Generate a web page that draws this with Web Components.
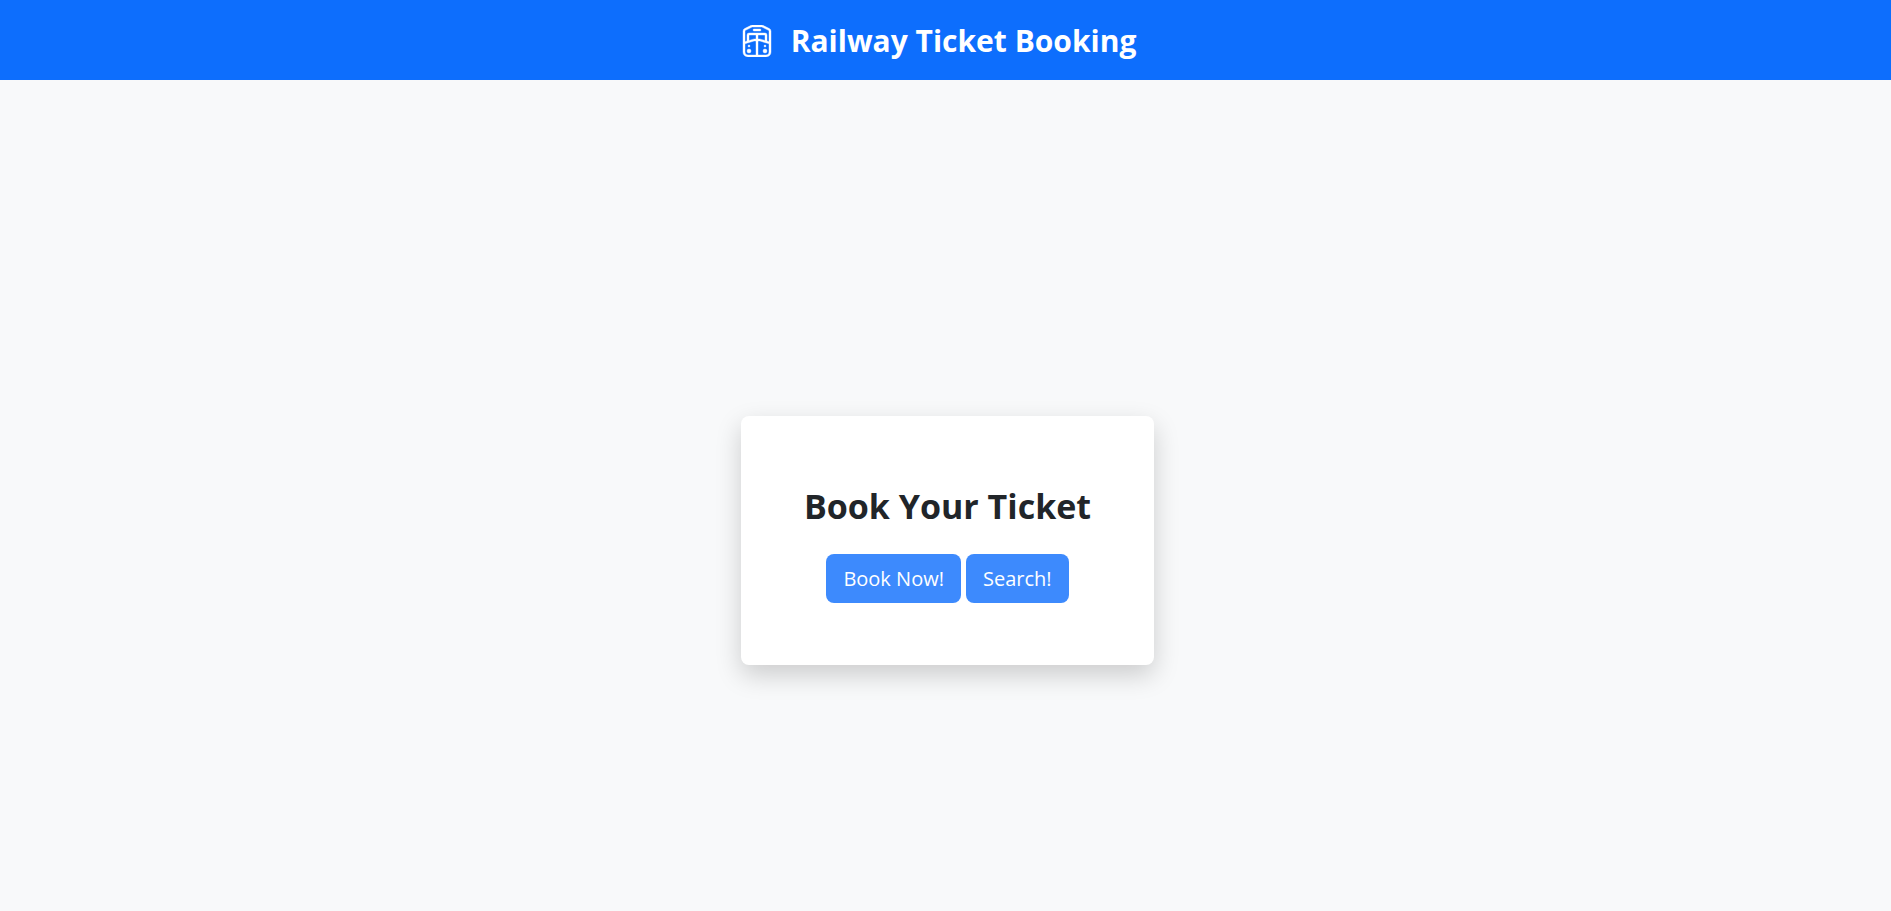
<!DOCTYPE html>
<html lang="en">
<head>
<meta charset="utf-8">
<title>Railway Ticket Booking</title>
<style>
html, body { margin: 0; }
body { font-family: "Segoe UI", "Open Sans", "Noto Sans", sans-serif; font-size: 16px; line-height: 24px; color: #212529; background: #f8f9fa; }
</style>
</head>
<body>
<booking-page>
  <site-header slot="header"><train-icon slot="icon"></train-icon>Railway Ticket Booking</site-header>
  <ticket-card>
    <span slot="title">Book Your Ticket</span>
    <action-button>Book Now!</action-button>
    <action-button>Search!</action-button>
  </ticket-card>
</booking-page>
<script>
const define = (name, html) => customElements.define(name, class extends HTMLElement {
  constructor() {
    super();
    const template = document.createElement('template');
    template.innerHTML = html;
    this.attachShadow({ mode: 'open' }).append(template.content.cloneNode(true));
  }
});

define('booking-page', `
<style>
:host { display: flex; flex-direction: column; min-height: 100vh; }
main { flex: 1; box-sizing: border-box; display: flex; align-items: center; justify-content: center; padding: 89px 0 0 4px; }
</style>
<slot name="header"></slot>
<main><slot></slot></main>`);

define('train-icon', `
<style>
:host { display: block; }
svg { display: block; width: 32px; height: 32px; fill: currentColor; stroke: currentColor; stroke-width: .2; }
</style>
<svg viewBox="0 0 16 16" aria-hidden="true">
<path d="M5.065.158A1.5 1.5 0 0 1 5.736 0h4.528a1.5 1.5 0 0 1 .67.158l3.237 1.618a1.5 1.5 0 0 1 .83 1.342V13.5a2.5 2.5 0 0 1-2.5 2.5h-9A2.5 2.5 0 0 1 1 13.5V3.118a1.5 1.5 0 0 1 .828-1.342zM2 9.372V13.5A1.5 1.5 0 0 0 3.5 15h4V8h-.853a.5.5 0 0 0-.144.021zM8.5 15h4a1.5 1.5 0 0 0 1.5-1.5V9.372l-4.503-1.35A.5.5 0 0 0 9.353 8H8.5zM14 8.328v-5.21a.5.5 0 0 0-.276-.447l-3.236-1.618A.5.5 0 0 0 10.264 1H5.736a.5.5 0 0 0-.223.053L2.277 2.67A.5.5 0 0 0 2 3.118v5.21l1-.3V5a1 1 0 0 1 1-1h8a1 1 0 0 1 1 1v3.028zm-2-.6V5H8.5v2h.853a1.5 1.5 0 0 1 .431.063zM7.5 7V5H4v2.728l2.216-.665A1.5 1.5 0 0 1 6.646 7zm-1-5a.5.5 0 0 0 0 1h3a.5.5 0 0 0 0-1z"/>
<circle cx="4" cy="13" r="1"/><circle cx="12" cy="13" r="1"/>
<circle cx="4" cy="10.5" r=".5"/><circle cx="12" cy="10.5" r=".5"/>
</svg>`);

define('site-header', `
<style>
:host { display: flex; align-items: center; justify-content: center; gap: 18px; padding: 21px 14px 19px 0; background: #0d6efd; color: #fff; }
h1 { margin: 0; font-size: 30px; line-height: 40px; font-weight: 700; }
</style>
<slot name="icon"></slot><h1><slot></slot></h1>`);

define('ticket-card', `
<style>
:host { display: block; padding: 66px 63px 62px; background: #fff; border-radius: 8px; box-shadow: 0 10px 26px rgba(0,0,0,.18); text-align: center; }
h2 { margin: 0 0 24px; font-size: 34px; line-height: 48px; font-weight: 700; }
.actions { display: flex; justify-content: center; gap: 5px; }
</style>
<h2><slot name="title"></slot></h2>
<div class="actions"><slot></slot></div>`);

define('action-button', `
<style>
:host { display: block; }
button { display: block; padding: 9px 17px; border: 0; border-radius: 8px; background: #0d6efd; color: #fff; font: inherit; font-size: 20px; line-height: 31px; opacity: .8; cursor: pointer; }
</style>
<button type="button"><slot></slot></button>`);
</script>
</body>
</html>
